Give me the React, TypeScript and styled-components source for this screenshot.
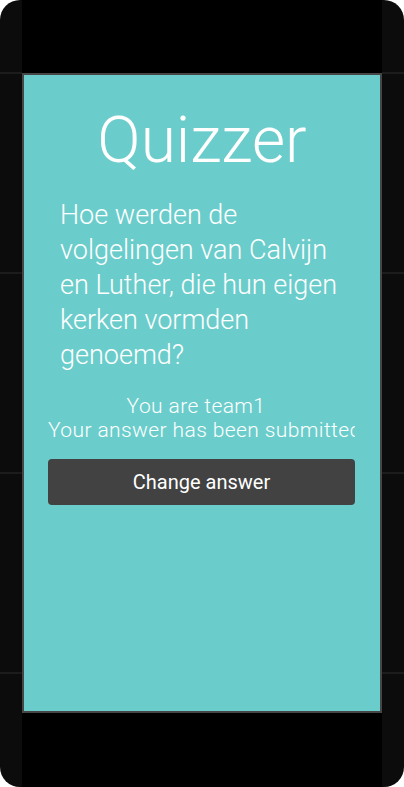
import React from "react";
import styled, { createGlobalStyle } from "styled-components";

const GlobalStyle = createGlobalStyle`
  html, body {
    margin: 0;
    padding: 0;
    background: #ffffff;
  }
  * { box-sizing: border-box; }
`;

const Phone = styled.div`
  width: 404px;
  height: 787px;
  border-radius: 20px;
  overflow: hidden;
  display: grid;
  grid-template-columns: 22px minmax(0, 1fr) 22px;
  background-color: #0c0c0c;
  background-image: repeating-linear-gradient(
    to bottom,
    transparent 0 72px,
    #1c1c1c 72px 74px,
    transparent 74px 200px
  );
`;

const Side = styled.div``;

const Middle = styled.div`
  background: #000000;
  display: flex;
  flex-direction: column;
  padding-top: 73px;
  min-width: 0;
`;

const Screen = styled.main`
  height: 640px;
  border: 2px solid #464646;
  background: #6bcdcb;
  display: flex;
  flex-direction: column;
  color: #ffffff;
  font-family: Roboto, "Liberation Sans", sans-serif;
  min-width: 0;
`;

const Title = styled.h1`
  margin: 28px 0 0;
  font-size: 64px;
  line-height: 76px;
  font-weight: 300;
  text-align: center;
`;

const Question = styled.p`
  margin: 19px 30px 0 36px;
  font-size: 27px;
  line-height: 35px;
  font-weight: 300;
`;

const Panel = styled.section`
  margin: 21px 25px 0 24px;
  display: flex;
  flex-direction: column;
  min-width: 0;
`;

const StatusLine = styled.div<{ $shift?: number }>`
  font-size: 21px;
  line-height: 24px;
  font-weight: 300;
  letter-spacing: 0.4px;
  text-align: center;
  white-space: nowrap;
  overflow: hidden;
  min-width: 0;
  padding-right: ${(p) => p.$shift ?? 0}px;
`;

const Button = styled.button`
  margin-top: 17px;
  height: 46px;
  border: none;
  border-radius: 4px;
  background: #424242;
  color: #ffffff;
  font-family: Roboto, "Liberation Sans", sans-serif;
  font-size: 20px;
  font-weight: 400;
  display: flex;
  align-items: center;
  justify-content: center;
  padding: 0;
`;

export default function App() {
  return (
    <>
      <GlobalStyle />
      <Phone>
        <Side />
        <Middle>
          <Screen>
            <Title>Quizzer</Title>
            <Question>
              Hoe werden de volgelingen van Calvijn en Luther, die hun eigen
              kerken vormden genoemd?
            </Question>
            <Panel>
              <StatusLine $shift={11}>You are team1</StatusLine>
              <StatusLine>Your answer has been submitted</StatusLine>
              <Button>Change answer</Button>
            </Panel>
          </Screen>
        </Middle>
        <Side />
      </Phone>
    </>
  );
}
